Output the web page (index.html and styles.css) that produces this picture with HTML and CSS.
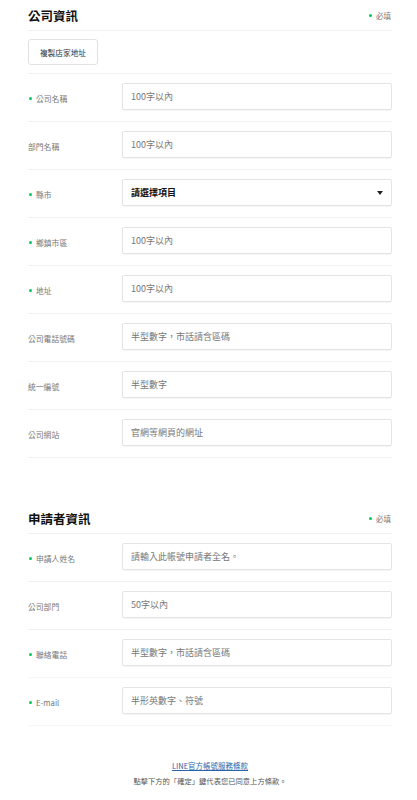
FILE: index.html
```html
<!DOCTYPE html>
<html lang="zh-Hant">
<head>
<meta charset="utf-8">
<link rel="stylesheet" href="styles.css">
</head>
<body>
<main class="page">
  <section class="section">
    <div class="sec-head">
      <h2 class="sec-title">公司資訊</h2>
      <span class="req-note"><i class="dot"></i>必填</span>
    </div>
    <div class="btn-row">
      <button class="copy-btn">複製店家地址</button>
    </div>
    <div class="row">
      <label class="lbl"><i class="dot"></i>公司名稱</label>
      <div class="field">100字以內</div>
    </div>
    <div class="row">
      <label class="lbl plain">部門名稱</label>
      <div class="field">100字以內</div>
    </div>
    <div class="row">
      <label class="lbl"><i class="dot"></i>縣市</label>
      <div class="field select">請選擇項目<span class="caret"></span></div>
    </div>
    <div class="row">
      <label class="lbl"><i class="dot"></i>鄉鎮市區</label>
      <div class="field">100字以內</div>
    </div>
    <div class="row">
      <label class="lbl"><i class="dot"></i>地址</label>
      <div class="field">100字以內</div>
    </div>
    <div class="row">
      <label class="lbl plain">公司電話號碼</label>
      <div class="field">半型數字，市話請含區碼</div>
    </div>
    <div class="row">
      <label class="lbl plain">統一編號</label>
      <div class="field">半型數字</div>
    </div>
    <div class="row">
      <label class="lbl plain">公司網站</label>
      <div class="field">官網等網頁的網址</div>
    </div>
  </section>

  <section class="section second">
    <div class="sec-head">
      <h2 class="sec-title">申請者資訊</h2>
      <span class="req-note"><i class="dot"></i>必填</span>
    </div>
    <div class="row">
      <label class="lbl"><i class="dot"></i>申請人姓名</label>
      <div class="field">請輸入此帳號申請者全名。</div>
    </div>
    <div class="row">
      <label class="lbl plain">公司部門</label>
      <div class="field">50字以內</div>
    </div>
    <div class="row faint">
      <label class="lbl"><i class="dot"></i>聯絡電話</label>
      <div class="field">半型數字，市話請含區碼</div>
    </div>
    <div class="row faint">
      <label class="lbl"><i class="dot"></i>E-mail</label>
      <div class="field">半形英數字、符號</div>
    </div>
  </section>

  <footer class="terms">
    <a class="terms-link" href="#">LINE官方帳號服務條款</a>
    <p class="terms-note">點擊下方的「確定」鍵代表您已同意上方條款。</p>
  </footer>
</main>
</body>
</html>
```
FILE: styles.css
```css
* { box-sizing: border-box; }
html, body { margin: 0; padding: 0; background: #fff; }
body {
  font-family: "Noto Sans CJK TC", "Noto Sans", sans-serif;
  color: #333;
}
.page {
  width: 364px;
  margin-left: 28px;
}
.sec-head {
  height: 31px;
  display: flex;
  align-items: center;
  justify-content: space-between;
  border-bottom: 1px solid #f0f0f0;
  padding-top: 1px;
}
.sec-title {
  margin: 0;
  font-size: 12.5px;
  font-weight: 700;
  color: #111;
  line-height: 16px;
}
.req-note {
  display: flex;
  align-items: center;
  font-size: 7.5px;
  color: #777;
  margin-right: 1px;
}
.dot {
  display: inline-block;
  width: 3px;
  height: 3px;
  border-radius: 50%;
  background: #06c755;
  margin-right: 4px;
}
.btn-row {
  display: flex;
  padding: 8px 0;
  border-bottom: 1px solid #f0f0f0;
}
.copy-btn {
  width: 70px;
  height: 26px;
  background: #fff;
  border: 1px solid #e2e2e2;
  border-radius: 3px;
  font-family: inherit;
  font-size: 7.7px;
  color: #333;
  padding: 0;
}
.row {
  display: flex;
  align-items: center;
  padding: 9px 0 11px;
  border-bottom: 1px solid #f0f0f0;
}
.row.faint { border-bottom-color: #f6f6f6; }
.lbl {
  width: 94px;
  flex: none;
  display: flex;
  align-items: center;
  font-size: 7.8px;
  color: #777;
  line-height: 12px;
  padding-top: 4px;
  padding-left: 1px;
}
.lbl.plain { padding-left: 0; }
.field {
  flex: 1;
  height: 27px;
  border: 1px solid #e4e4e4;
  border-radius: 2px;
  box-shadow: 0 1px 1px rgba(0,0,0,0.04);
  display: flex;
  align-items: center;
  padding-left: 8px;
  font-size: 9px;
  color: #777;
}
.field.select {
  color: #111;
  font-weight: 700;
  justify-content: space-between;
  padding-right: 8px;
}
.caret {
  width: 0;
  height: 0;
  border-left: 3px solid transparent;
  border-right: 3px solid transparent;
  border-top: 4px solid #222;
}
.second { margin-top: 45px; }
.terms {
  text-align: center;
  padding-top: 24px;
}
.terms-link {
  font-size: 7.5px;
  color: #2a64a8;
  text-decoration: underline;
  line-height: 12px;
  display: inline-block;
}
.terms-note {
  margin: 1px 0 0;
  font-size: 7.3px;
  color: #555;
  line-height: 12px;
}
```
